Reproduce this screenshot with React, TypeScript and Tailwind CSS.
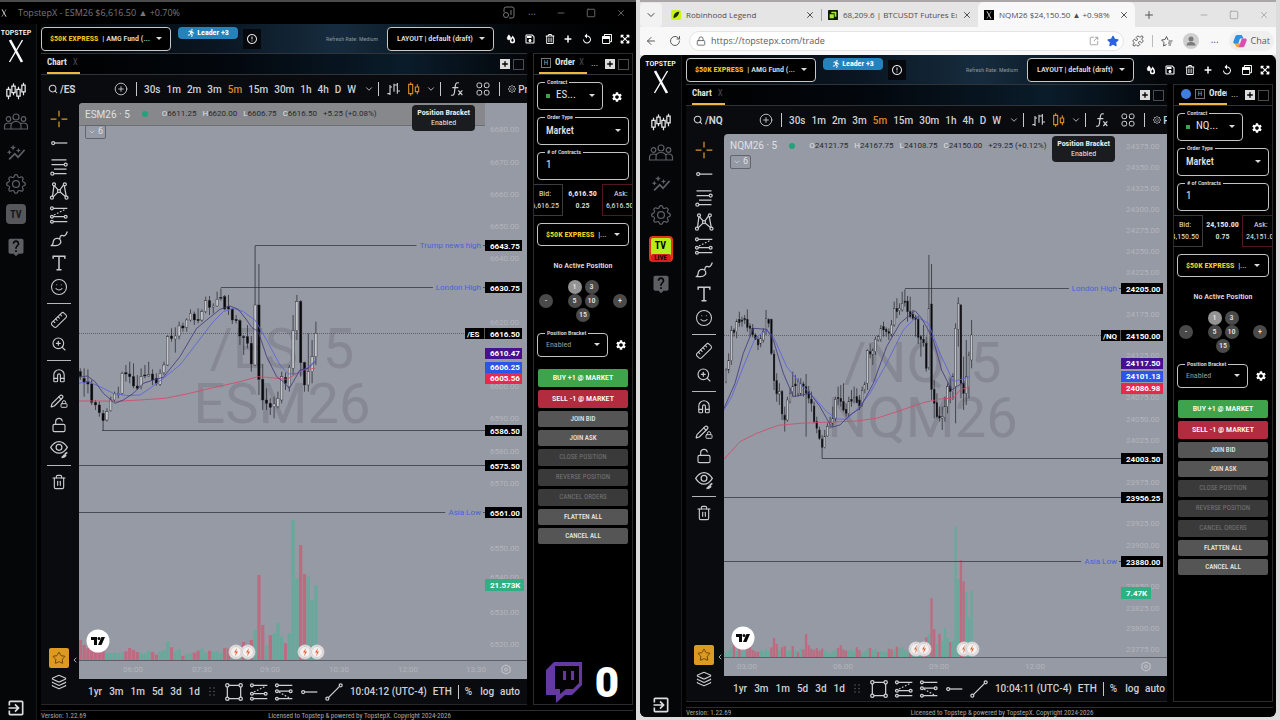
import type { ReactNode } from "react";
import clsx from "clsx";
import {
  ArrowLeft,
  ChevronDown,
  ChevronLeft,
  CirclePlus,
  Eye,
  Layers,
  Lock,
  LockOpen,
  Magnet,
  Minus,
  Pencil,
  Plus,
  Puzzle,
  RotateCw,
  Ruler,
  Search,
  Smile,
  Square,
  SquareArrowOutUpRight,
  Star,
  Trash2,
  X,
  ZoomIn,
} from "lucide-react";
import {
  MdAutoGraph,
  MdErrorOutline,
  MdExitToApp,
  MdLiveHelp,
  MdOutlineSave,
  MdReplay,
  MdSettings,
} from "react-icons/md";
import { FaExpandArrowsAlt, FaRegTrashAlt, FaRegWindowRestore, FaRunning, FaStar } from "react-icons/fa";
import { BsGear } from "react-icons/bs";

/* ---------- market data ---------- */

// high, low, body top, body bottom, 1 = up candle
type Candle = [number, number, number, number, number];

const esCandles: Candle[] = [
  [385, 420, 395, 410, 0], [385, 470, 415, 428, 0], [388, 460, 425, 432, 0], [420, 495, 432, 487, 0],
  [480, 510, 487, 495, 0], [485, 530, 495, 518, 0], [510, 572, 520, 542, 0], [505, 545, 515, 540, 1],
  [470, 515, 480, 512, 1], [455, 485, 462, 480, 1], [440, 475, 460, 465, 1], [395, 465, 400, 460, 1],
  [375, 425, 398, 402, 0], [365, 430, 402, 410, 0], [370, 445, 410, 438, 0], [405, 450, 438, 445, 0],
  [385, 448, 410, 440, 1], [375, 415, 405, 408, 0], [365, 410, 404, 408, 1], [388, 435, 402, 420, 0],
  [400, 437, 415, 430, 0], [388, 438, 400, 433, 1], [365, 405, 375, 398, 1], [285, 378, 290, 375, 1],
  [265, 305, 288, 296, 0], [262, 338, 288, 297, 1], [245, 298, 258, 288, 1], [248, 275, 258, 264, 0],
  [235, 275, 240, 262, 1], [208, 245, 220, 240, 1], [215, 255, 222, 240, 0], [205, 250, 238, 242, 0],
  [208, 245, 215, 240, 1], [170, 220, 182, 215, 1], [168, 225, 182, 202, 0], [190, 220, 198, 202, 1],
  [155, 200, 178, 198, 1], [145, 182, 172, 175, 0], [165, 210, 170, 207, 0], [165, 225, 200, 207, 0],
  [205, 252, 208, 240, 0], [225, 250, 238, 242, 0], [238, 315, 242, 288, 0], [285, 345, 290, 292, 0],
  [255, 325, 290, 310, 0], [288, 395, 310, 372, 0], [18, 378, 195, 375, 1], [72, 465, 195, 418, 0],
  [372, 510, 418, 480, 0], [445, 510, 480, 490, 0], [475, 525, 490, 502, 0], [470, 535, 492, 500, 1],
  [455, 505, 475, 500, 1], [395, 490, 410, 480, 1], [398, 450, 412, 430, 0], [375, 455, 382, 440, 1],
  [225, 405, 272, 385, 1], [165, 300, 185, 272, 1], [180, 410, 185, 368, 0], [365, 455, 368, 435, 0],
  [280, 455, 395, 435, 1], [300, 430, 350, 395, 1], [245, 375, 280, 350, 1],
];

const nqCandles: Candle[] = [
  [385, 430, 390, 425, 1], [340, 400, 362, 390, 1], [258, 375, 272, 362, 1], [265, 290, 270, 278, 0],
  [238, 295, 245, 275, 1], [215, 260, 238, 248, 0], [230, 260, 240, 244, 0], [225, 252, 235, 240, 0],
  [208, 275, 238, 262, 0], [250, 290, 258, 265, 0], [252, 292, 265, 285, 0], [280, 300, 285, 298, 0],
  [290, 330, 298, 315, 0], [285, 322, 295, 312, 1], [265, 308, 275, 300, 1], [210, 285, 235, 270, 1],
  [235, 262, 238, 250, 0], [236, 345, 238, 340, 0], [330, 450, 342, 422, 0], [400, 485, 422, 462, 0],
  [430, 495, 455, 462, 1], [450, 540, 455, 522, 0], [500, 575, 525, 540, 0], [470, 545, 480, 540, 1],
  [445, 490, 460, 485, 1], [395, 470, 440, 455, 1], [405, 470, 432, 438, 0], [415, 470, 425, 462, 1],
  [415, 468, 430, 462, 1], [425, 470, 432, 440, 0], [402, 590, 440, 460, 0], [438, 490, 455, 475, 0],
  [455, 515, 478, 490, 0], [485, 550, 498, 545, 0], [530, 580, 545, 565, 0], [560, 600, 570, 595, 0],
  [585, 655, 597, 622, 0], [570, 625, 590, 622, 1], [550, 590, 560, 588, 1], [530, 565, 548, 560, 1],
  [500, 560, 535, 552, 1], [470, 545, 478, 535, 1], [440, 495, 472, 476, 0], [435, 500, 475, 485, 0],
  [430, 515, 485, 510, 0], [490, 530, 508, 520, 0], [470, 530, 485, 520, 1], [450, 500, 478, 484, 0],
  [440, 490, 472, 476, 1], [445, 490, 470, 488, 0], [465, 510, 480, 498, 0], [440, 500, 452, 490, 1],
  [425, 460, 432, 448, 1], [328, 450, 332, 430, 1], [310, 355, 335, 342, 0], [325, 375, 330, 345, 1],
  [290, 345, 298, 335, 1], [285, 305, 290, 300, 1], [255, 305, 265, 298, 1], [245, 290, 260, 270, 0],
  [262, 290, 268, 275, 0], [265, 300, 275, 280, 0], [240, 290, 255, 282, 1], [185, 260, 205, 255, 1],
  [175, 235, 205, 215, 0], [190, 225, 205, 212, 1], [155, 215, 190, 210, 1], [148, 200, 183, 188, 0],
  [168, 245, 183, 215, 0], [170, 235, 215, 230, 0], [210, 240, 222, 235, 0], [225, 290, 232, 238, 0],
  [228, 312, 238, 292, 0], [285, 350, 290, 298, 0], [255, 320, 298, 308, 0], [290, 395, 310, 385, 0],
  [45, 390, 205, 382, 1], [72, 480, 192, 448, 0], [420, 535, 448, 490, 0], [460, 535, 488, 530, 0],
  [500, 545, 528, 534, 0], [500, 570, 530, 535, 1], [470, 545, 500, 532, 1], [430, 520, 440, 500, 1],
  [415, 490, 440, 455, 0], [400, 480, 410, 455, 1], [250, 550, 265, 440, 1], [172, 320, 190, 268, 1],
  [192, 475, 195, 430, 0], [350, 510, 430, 460, 0], [300, 495, 410, 460, 1], [335, 475, 345, 440, 1],
  [240, 385, 285, 360, 1],
];

// negative = sell volume
const esVolume = [
  -60, -45, -35, -35, -32, -30, -30, 22, 20, 22, 20, 24, -26, -36, -30, -24, 22, 20, 28, -24, -16, 26, 30, 56,
  -38, 26, 32, -12, 18, 20, -22, -28, 34, 22, -28, 24, 26, 20, -36, -34, 26, -34, 40, -54, 40, -60, 90, -255,
  -105, 45, -74, 80, 112, 70, -50, 80, 420, 245, -345, -258, 250, 180, 225,
];
const nqVolume = [
  16, 20, 30, -60, 20, -25, 18, 30, -58, -40, -22, -18, -16, 22, 18, 24, 20, -30, -58, -40, 22, -30, -34, 20,
  22, -34, 20, -16, 26, -24, -70, -36, -26, -22, -28, -20, -26, 20, 16, 12, 18, 22, -28, -36, -24, -20, 20, 24,
  18, -30, -22, 14, 18, 26, -28, 22, 24, -16, 20, 18, 14, -26, -24, 22, -32, 26, 30, 22, 18, -24, 20, 24, 30,
  22, -20, -60, 70, -178, -84, 40, -70, 50, 88, 60, -46, 50, 392, 235, -292, -228, 195, 120, 200,
];

type Level = { y: number; price: string; from?: number; label?: string };

type Market = {
  symbol: string;
  contract: string;
  short: string;
  width: number;
  height: number;
  offset: string;
  start: number;
  step: number;
  base: number;
  body: number;
  candles: Candle[];
  volume: number[];
  fast: string;
  slow: string;
  trend: string;
  tagX: number;
  tagW: number;
  watermarkY: number;
  levels: Level[];
  averages: { y: number; price: string; fill: string }[];
  last: { y: number; price: string };
  volumeTag: { y: number; text: string; w: number };
  ticks: [number, string][];
  times: [number, string][];
  news: number[];
  legend: [string, string][];
  change: string;
  clock: string;
  bid: string;
  mid: string;
  spread: string;
  ask: string;
};

const es: Market = {
  symbol: "/ES", contract: "ESM26", short: "ES...", width: 448, height: 576,
  offset: "translate(-79 137) scale(0.3333)", start: 241, step: 11.4, base: 1260, body: 7,
  candles: esCandles, volume: esVolume,
  fast: "236,412 262,408 285,425 310,460 345,490 370,480 400,460 430,430 460,420 490,412 540,350 590,265 630,232 660,208 690,198 715,208 740,240 755,262 775,275 800,350 830,410 850,425 868,445 880,425 900,390 925,385 945,365",
  slow: "236,430 265,425 300,440 340,460 380,467 420,465 450,445 490,415 540,375 590,310 640,245 670,215 700,205 730,215 765,240 800,300 840,375 865,402 890,400 920,385 948,360",
  trend: "236,483 300,483 350,484 420,480 495,475 560,462 640,443 720,425 775,410 800,412 860,418 910,390 945,385",
  tagX: 406, tagW: 38, watermarkY: 265,
  levels: [
    { y: 142, price: "6643.75", from: 176, label: "Trump news high" },
    { y: 184, price: "6630.75", from: 142, label: "London High" },
    { y: 327, price: "6586.50", from: 23 },
    { y: 362, price: "6575.50" },
    { y: 409, price: "6561.00", label: "Asia Low" },
  ],
  averages: [
    { y: 250, price: "6610.47", fill: "#47108f" },
    { y: 264, price: "6606.25", fill: "#2b55e6" },
    { y: 275, price: "6605.56", fill: "#e5294f" },
  ],
  last: { y: 230, price: "6616.50" },
  volumeTag: { y: 482, text: "21.573K", w: 39 },
  ticks: [
    [26, "6680.00"], [59, "6670.00"], [91, "6660.00"], [123, "6650.00"], [155, "6640.00"], [219, "6620.00"],
    [283, "6600.00"], [315, "6590.00"], [348, "6580.00"], [380, "6570.00"], [445, "6550.00"], [474, "6540.00"],
    [509, "6530.00"], [541, "6520.00"],
  ],
  times: [[54, "06:00"], [123, "07:30"], [191, "09:00"], [260, "10:30"], [329, "12:00"], [397, "13:30"]],
  news: [157, 169, 226, 238],
  legend: [["O", "6611.25"], ["H", "6620.00"], ["L", "6606.75"], ["C", "6616.50"]],
  change: "+5.25 (+0.08%)", clock: "10:04:12 (UTC-4)",
  bid: "6,616.25", mid: "6,616.50", spread: "0.25", ask: "6,616.50",
};

const nq: Market = {
  symbol: "/NQ", contract: "NQM26", short: "NQ...", width: 443, height: 542,
  offset: "translate(-84 106) scale(0.3333)", start: 258, step: 8.01, base: 1252, body: 5,
  candles: nqCandles, volume: nqVolume,
  fast: "252,505 285,430 310,340 340,265 380,268 400,300 430,400 460,470 510,460 540,500 575,562 600,555 630,525 660,505 700,430 740,320 780,250 825,212 845,235 862,265 880,300 905,390 935,450 950,440 975,425",
  slow: "252,510 275,470 310,380 345,295 380,270 400,290 440,380 480,430 520,470 560,515 590,537 620,538 650,510 690,460 740,370 790,270 830,230 865,250 900,340 940,425 990,410",
  trend: "252,658 300,605 350,580 415,556 480,550 580,546 650,543 710,535 780,512 850,488 900,477 940,475 960,450 990,440",
  tagX: 397, tagW: 43, watermarkY: 248,
  levels: [
    { y: 154, price: "24205.00", from: 181, label: "London High" },
    { y: 324, price: "24003.50", from: 98 },
    { y: 363, price: "23956.25" },
    { y: 427, price: "23880.00", label: "Asia Low" },
  ],
  averages: [
    { y: 229, price: "24117.50", fill: "#47108f" },
    { y: 242, price: "24101.13", fill: "#2b55e6" },
    { y: 254, price: "24086.98", fill: "#e5294f" },
  ],
  last: { y: 201, price: "24150.00" },
  volumeTag: { y: 459, text: "7.47K", w: 30 },
  ticks: [
    [12, "24375.00"], [33, "24350.00"], [54, "24325.00"], [75, "24300.00"], [96, "24275.00"], [117, "24250.00"],
    [138, "24225.00"], [180, "24175.00"], [221, "24125.00"], [263, "24075.00"], [285, "24050.00"],
    [306, "24025.00"], [348, "23975.00"], [389, "23925.00"], [411, "23900.00"], [452, "23850.00"],
    [474, "23825.00"], [494, "23800.00"], [515, "23775.00"],
  ],
  times: [[23, "03:00"], [119, "06:00"], [215, "09:00"], [311, "12:00"]],
  news: [192, 200, 240, 248],
  legend: [["O", "24121.75"], ["H", "24167.75"], ["L", "24108.75"], ["C", "24150.00"]],
  change: "+29.25 (+0.12%)", clock: "10:04:11 (UTC-4)",
  bid: "24,150.50", mid: "24,150.00", spread: "0.75", ask: "24,151.00",
};

/* ---------- small icons ---------- */

type IconProps = { className?: string };

const Icon = ({ children, className = "size-5" }: { children: ReactNode; className?: string }) => (
  <svg
    viewBox="0 0 24 24"
    fill="none"
    stroke="currentColor"
    strokeWidth="1.5"
    className={clsx("flex-none", className)}
    aria-hidden
  >
    {children}
  </svg>
);

const CrossIcon = () => (
  <Icon>
    <path d="M12 2v7M12 15v7M2 12h7M15 12h7" />
  </Icon>
);
const HLineIcon = () => (
  <Icon>
    <circle cx="5" cy="12" r="1.8" />
    <path d="M7 12h15" />
  </Icon>
);
const FibIcon = () => (
  <Icon>
    <path d="M3 3.500h18M3 9h15M6 14.500h15M6 20h15" />
    <circle cx="20" cy="9" r="1.800" />
    <circle cx="4" cy="20" r="1.800" />
  </Icon>
);
const PatternIcon = () => (
  <Icon>
    <path d="M4 20 6 5l6 7 6-8 3 16M5 19l7-7 8 7" />
    <circle cx="6" cy="4" r="1.800" fill="#0b0d11" />
    <circle cx="19" cy="4" r="1.800" fill="#0b0d11" />
    <circle cx="12" cy="12" r="1.800" fill="#0b0d11" />
    <circle cx="3.500" cy="20" r="1.800" fill="#0b0d11" />
    <circle cx="21" cy="20" r="1.800" fill="#0b0d11" />
  </Icon>
);
const ForecastIcon = () => (
  <Icon>
    <path d="M5 4h17M5 14h13M5 20h17" />
    <path d="m6 12 14-7" strokeDasharray="2 2" />
    <circle cx="3.500" cy="4" r="1.700" />
    <circle cx="3.500" cy="14" r="1.700" />
    <circle cx="3.500" cy="20" r="1.700" />
    <circle cx="20" cy="14" r="1.700" />
  </Icon>
);
const PositionIcon = () => (
  <Icon>
    <path d="M5 4h17M5 11h13M5 20h17" />
    <path d="m6 12 12 7" strokeDasharray="2 2" />
    <circle cx="3.500" cy="4" r="1.700" />
    <circle cx="3.500" cy="11" r="1.700" />
    <circle cx="3.500" cy="20" r="1.700" />
    <circle cx="20" cy="11" r="1.700" />
  </Icon>
);
const BrushIcon = () => (
  <Icon>
    <path d="M2 20c4 0 2-4 4-7s7-2 8 1-2 6-6 6H2zM13 12c0-3 1-5 4-4 2 1 4-2 5-5" />
  </Icon>
);
const TextIcon = () => (
  <Icon>
    <path d="M5 7V4h14v3M12 4v16M9 20h6" strokeWidth="1.8" />
  </Icon>
);
const LineIcon = () => (
  <Icon>
    <path d="M5 19 19 5" />
    <circle cx="4" cy="20" r="1.800" />
    <circle cx="20" cy="4" r="1.800" />
  </Icon>
);
const RectIcon = () => (
  <Icon>
    <path d="M4 4h16v16H4z" />
    <circle cx="4" cy="4" r="2" fill="#0b0d11" />
    <circle cx="20" cy="4" r="2" fill="#0b0d11" />
    <circle cx="4" cy="20" r="2" fill="#0b0d11" />
    <circle cx="20" cy="20" r="2" fill="#0b0d11" />
  </Icon>
);
const EyeToolIcon = () => (
  <Icon>
    <path d="M2 10c3-5 6-7 10-7s7 2 10 7c-3 5-6 7-10 7s-7-2-10-7z" />
    <circle cx="12" cy="10" r="3.500" />
    <path d="M15 22c3 0 2-3 4-3s1 3-4 3zM19 18l3-2" strokeWidth="2" />
  </Icon>
);
const CandlesIcon = ({ className }: IconProps) => (
  <Icon className={className}>
    <path d="M3 7v3M3 18v4M9 3v3M9 14v3M15 7v3M15 18v4M21 2v3M21 13v4" />
    <path d="M1 10h4v8H1zM7 6h4v8H7zM13 10h4v8h-4zM19 5h4v8h-4z" />
  </Icon>
);
const PeopleIcon = () => (
  <svg viewBox="0 0 26 20" fill="none" stroke="currentColor" strokeWidth="1.2" className="h-5 w-6.5" aria-hidden>
    <circle cx="13" cy="5" r="3" />
    <circle cx="5.500" cy="7" r="2.300" />
    <circle cx="20.500" cy="7" r="2.300" />
    <path d="M8 17v-3c0-3 2-4.500 5-4.500s5 1.500 5 4.500v3zM8 17H1.500v-2.500c0-2 1.500-3.500 4-3.500 1 0 2 .3 2.700.8M18 17h6.500v-2.500c0-2-1.500-3.500-4-3.500-1 0-2 .3-2.700.8" />
  </svg>
);
const DropsIcon = () => (
  <Icon className="size-2.5">
    <path d="M7 2c2 3 4 5 4 8a4 4 0 0 1-8 0c0-3 2-5 4-8z" fill="currentColor" />
    <path d="M16 7c2 3 4 5 4 9a4.500 4.500 0 0 1-9 0c0-4 3-6 5-9z" strokeWidth="3.500" />
  </Icon>
);
const OhlcIcon = () => (
  <Icon className="size-4">
    <path d="M6 6v15M2 19h4M6 9h3M17 3v16M13 6h4M17 15h4M12 4v12" strokeWidth="1.7" />
  </Icon>
);
const CandleTypeIcon = () => (
  <Icon className="size-4">
    <path d="M7 2v3M7 19v3M4 5h6v14H4zM17 5v4M17 16v4M14 9h5v7h-5z" strokeWidth="1.7" />
  </Icon>
);
const GridIcon = () => (
  <Icon className="size-4">
    <rect x="3" y="3" width="7" height="7" rx="2.500" />
    <rect x="14" y="3" width="7" height="7" rx="2.500" />
    <rect x="3" y="14" width="7" height="7" rx="2.500" />
    <rect x="14" y="14" width="7" height="7" rx="2.500" />
  </Icon>
);
const FxIcon = () => (
  <Icon className="size-4">
    <path d="M15 3c-3-1-5 0-5.500 4L8 18c-.5 3-2 4-5 3M5 10h9M14 14l6 7M20 14l-6 7" strokeWidth="1.8" />
  </Icon>
);
const DotsIcon = () => (
  <svg viewBox="0 0 8 12" fill="currentColor" className="h-3 w-2 text-[#55585f]" aria-hidden>
    {[1, 4.5, 8].map((y) => (
      <g key={y}>
        <circle cx="2" cy={y + 1} r=".8" />
        <circle cx="6" cy={y + 1} r=".8" />
      </g>
    ))}
  </svg>
);
const TopstepX = ({ className }: IconProps) => (
  <svg viewBox="0 0 16 24" fill="none" stroke="currentColor" className={className} aria-hidden>
    <path d="M2 1 14 23" strokeWidth="2.600" />
    <path d="M14.500 1 1.500 23" strokeWidth="1.400" />
  </svg>
);
const TwitchLogo = () => (
  <svg viewBox="0 0 38 42" className="h-[42px] w-[38px]" aria-label="Twitch" role="img">
    <path d="M9 0 1 8v25h10v8l9-8h7l10-10V0z" fill="#6439a0" />
    <path d="M10 4h24v17l-6 6h-7l-6 5v-5h-5z" fill="#030305" />
    <path d="M18 9h3v9h-3zM26 9h3v9h-3z" fill="#6439a0" />
  </svg>
);

/* ---------- chart ---------- */

const Chart = ({ m }: { m: Market }) => {
  const axisY = m.height - 18.5;
  const half = m.tagX / 2;
  return (
    <svg
      viewBox={`0 0 ${m.width} ${m.height}`}
      className="h-full w-full font-[Roboto,sans-serif] text-[8px]"
      role="img"
      aria-label={`${m.contract} chart`}
    >
      <g fill="#868993" fontSize="56" textAnchor="middle">
        <text x={half} y={m.watermarkY}>{m.symbol}, 5</text>
        <text x={half} y={m.watermarkY + 55}>{m.contract}</text>
      </g>
      <g transform={m.offset}>
        {m.volume.map((v, i) => (
          <rect
            key={i}
            x={m.start + i * m.step - m.body * 0.7}
            y={m.base - Math.abs(v)}
            width={m.body * 1.4}
            height={Math.abs(v)}
            fill={v < 0 ? "#bd6b80" : "#67a99b"}
          />
        ))}
      </g>
      {m.levels.map((l) => (
        <path key={l.price} d={`M${l.from ?? 0} ${l.y + 0.5}H${m.tagX}`} stroke="#4a4d56" />
      ))}
      <path d={`M0 ${m.last.y + 0.5}H${m.tagX}`} stroke="#5c5f68" strokeDasharray="1 1" />
      <g transform={m.offset}>
        {m.candles.map(([high, low, top, bottom, up], i) => {
          const x = m.start + i * m.step;
          return (
            <g key={i}>
              <path d={`M${x} ${high}V${low}`} stroke="#26282e" strokeWidth="2.2" />
              <rect
                x={x - m.body / 2}
                y={top}
                width={m.body}
                height={Math.max(bottom - top, 3)}
                fill={up ? "#c3c5cb" : "#08080b"}
                stroke="#26282e"
                strokeWidth="1.2"
              />
            </g>
          );
        })}
        <g fill="none" strokeWidth="2.600" strokeLinejoin="round">
          <polyline points={m.trend} stroke="#d34b6d" />
          <polyline points={m.slow} stroke="#5d62dd" />
          <polyline points={m.fast} stroke="#453b80" />
        </g>
      </g>

      <path d={`M0 ${axisY}H${m.width}`} stroke="#5c5f68" />
      <g fill="#b3b5bd" fontSize="8">
        {m.ticks.map(([y, t]) => (
          <text key={t} x={m.tagX + 5} y={y + 3}>{t}</text>
        ))}
        {m.times.map(([x, t]) => (
          <text key={t} x={x} y={m.height - 7} textAnchor="middle">{t}</text>
        ))}
      </g>
      <g fill="none" stroke="#c4c6cc">
        <path d={`M${m.width - 21} ${m.height - 14}l4 2v5l-4 2-4-2v-5z`} />
        <circle cx={m.width - 21} cy={m.height - 9.5} r="1.500" />
      </g>

      <g fontSize="8" fontWeight="700">
        {m.levels.map((l) => (
          <g key={l.price}>
            {l.label && (
              <>
                <rect x={m.tagX - 7 - l.label.length * 4.1} y={l.y - 4} width={l.label.length * 4.1 + 5} height="9" fill="#969aa4" />
                <text x={m.tagX - 4} y={l.y + 3} textAnchor="end" fill="#4a62dd" fontSize="8" fontWeight="400">
                  {l.label}
                </text>
              </>
            )}
            <rect x={m.tagX} y={l.y - 5} width={m.tagW - 1} height="11" fill="#000" />
            <text x={m.tagX + 5} y={l.y + 4} fill="#fff">{l.price}</text>
          </g>
        ))}
        {m.averages.map((a) => (
          <g key={a.price}>
            <rect x={m.tagX} y={a.y - 5} width={m.tagW - 1} height="11" fill={a.fill} />
            <text x={m.tagX + 5} y={a.y + 3} fill="#fff">{a.price}</text>
          </g>
        ))}
        <rect x={m.tagX - 20} y={m.last.y - 5} width={m.tagW + 19} height="11" fill="#000" />
        <path d={`M${m.tagX - 0.5} ${m.last.y - 5}v11`} stroke="#555" />
        <text x={m.tagX - 18} y={m.last.y + 4} fill="#fff">{m.symbol}</text>
        <text x={m.tagX + 5} y={m.last.y + 4} fill="#fff">{m.last.price}</text>
        <rect x={m.tagX} y={m.volumeTag.y - 6} width={m.volumeTag.w} height="12" fill="#2fb083" />
        <text x={m.tagX + 5} y={m.volumeTag.y + 3} fill="#fff">{m.volumeTag.text}</text>
      </g>

      <circle cx="19" cy={m.height - 38} r="11.500" fill="#fff" />
      <g transform={`translate(12 ${m.height - 42})`} fill="#08080a">
        <path d="M0 0h6v8H3V3H0zM10.500 0H14l-3.500 8H7z" />
        <circle cx="8" cy="1.500" r="1.500" />
      </g>
      {m.news.map((x) => (
        <g key={x}>
          <circle cx={x} cy={m.height - 27} r="7" fill="#f5f0f0" stroke="#d3cfd2" />
          <circle cx={x} cy={m.height - 27} r="5.500" fill="none" stroke="#c2babd" strokeWidth=".7" />
          <path d={`M${x + 1} ${m.height - 31}l-3 4.500h2l-1 4 3-5h-2z`} fill="#de6238" />
        </g>
      ))}
    </svg>
  );
};

const Legend = ({ m, strip }: { m: Market; strip?: boolean }) => (
  <div className="absolute inset-x-0 top-0 font-[Roboto,sans-serif] text-[8px]">
    <div className={clsx("mr-[42px] flex h-[23px] items-center pl-1.5", strip && "border-b border-[#6d6f74] bg-[#87888b]")}>
      <span className="text-[10px] text-[#dfe0e4]">{m.contract} · 5</span>
      <span className="ml-3 size-1.5 rounded-full bg-[#23a17c]" />
      <span className="ml-3.5 flex gap-1.5 whitespace-nowrap">
        {m.legend.map(([k, v]) => (
          <span key={k} className="text-[#26282e]">
            <span className="text-[#dfe0e4]">{k}</span>
            {v}
          </span>
        ))}
        <span className="text-[#26282e]">{m.change}</span>
      </span>
    </div>
    <button
      className={clsx(
        "ml-1.5 flex h-3.5 w-[21px] items-center justify-center gap-0.5 rounded-xs border border-[#62656e] text-[9px] text-[#dfe0e4]",
        strip ? "-mt-px" : "-mt-0.5",
      )}
    >
      <ChevronDown className="size-2" />6
    </button>
  </div>
);

const drawTools: (ReactNode | null)[] = [
  <span className="text-[#d99a20]"><CrossIcon /></span>,
  <HLineIcon />,
  <FibIcon />,
  <PatternIcon />,
  <ForecastIcon />,
  <BrushIcon />,
  <TextIcon />,
  <Smile className="size-[18px]" strokeWidth={1.4} />,
  null,
  <Ruler className="size-[18px] -scale-x-100" strokeWidth={1.4} />,
  <ZoomIn className="size-4" strokeWidth={1.7} />,
  null,
  <Magnet className="size-4 -rotate-45" strokeWidth={1.7} />,
  <span className="flex items-end"><Pencil className="size-3.5" strokeWidth={2} /><Lock className="-ml-1 size-2" strokeWidth={3} /></span>,
  <LockOpen className="size-4" strokeWidth={1.7} />,
  <EyeToolIcon />,
  null,
  <Trash2 className="size-4" strokeWidth={1.7} />,
];

const DrawColumn = () => (
  <div className="flex w-[38px] flex-none flex-col items-center pt-1 pr-0.5 text-[#c9cbd0]">
    {drawTools.map((tool, i) =>
      tool ? (
        <button key={i} className="flex h-6 w-full items-center justify-center">{tool}</button>
      ) : (
        <hr key={i} className="my-1 w-6 border-[#b5b7bc]" />
      ),
    )}
    <span className="flex-1" />
    <button className="relative flex size-5 items-center justify-center rounded-xs bg-[#dc9a22] text-[#5e3c00]">
      <Star className="size-3.5" strokeWidth={1.5} />
      <ChevronLeft className="absolute top-2 -right-2.5 size-2 text-white" />
    </button>
    <button className="mt-1 mb-[-13px] flex h-5 items-center">
      <Layers className="size-4" strokeWidth={1.7} />
    </button>
  </div>
);

const Divider = ({ className }: IconProps) => <span className={clsx("h-3.5 w-px flex-none bg-[#c5c7cb]", className)} />;

const PanelButtons = () => (
  <span className="flex flex-none items-center gap-[3px]">
    <button aria-label="Add tab" className="flex size-2.5 items-center justify-center bg-[#dcdcdc] text-black">
      <Plus className="size-2" strokeWidth={4} />
    </button>
    <button aria-label="Maximize" className="size-[11px] border border-[#4a4c50]" />
  </span>
);

const ChartPanel = ({ m, strip }: { m: Market; strip?: boolean }) => (
  <section className="flex min-w-0 flex-1 flex-col border-b border-[#24262a] bg-[#090b0f]">
    <div className="flex h-[22px] flex-none items-stretch justify-between border-y border-[#303338] bg-[linear-gradient(90deg,#000,#03080e_40%,#0a1c2a_75%,#03060a)] pr-[3px] pl-1.5">
      <button className="flex items-center gap-1.5 border-b-2 border-[#f0b73c] pr-0.5 text-[9px] font-bold text-[#e3e3e3]">
        Chart <span className="font-normal text-[#4b4d52]">X</span>
      </button>
      <PanelButtons />
    </div>
    <div className="flex h-7 flex-none items-center overflow-hidden pl-[7px] font-[Roboto,sans-serif] text-[10px] font-medium whitespace-nowrap text-[#cfd0d4]">
      <button className="flex w-[66px] flex-none items-center gap-0.5 font-bold">
        <Search className="size-2.5" strokeWidth={2.5} />
        {m.symbol}
      </button>
      <CirclePlus className="size-3.5 flex-none" strokeWidth={1.5} />
      <Divider className="ml-2" />
      <div className="ml-[7px] flex gap-1.5">
        {["30s", "1m", "2m", "3m", "5m", "15m", "30m", "1h", "4h", "D", "W"].map((t) => (
          <button key={t} className={t === "5m" ? "text-[#d98a24]" : ""}>{t}</button>
        ))}
      </div>
      <ChevronDown className="ml-2 size-2.5 flex-none" />
      <Divider className="mr-[7px] ml-1" />
      <OhlcIcon />
      <span className="ml-1 text-[#d98a24]"><CandleTypeIcon /></span>
      <ChevronDown className="ml-1 size-2.5 flex-none" />
      <Divider className="mr-2 ml-1" />
      <FxIcon />
      <span className="ml-2.5"><GridIcon /></span>
      <Divider className="mx-2" />
      <button className="flex flex-none items-center gap-0.5">
        <BsGear className="size-2" /> Profile
      </button>
    </div>
    <div className="flex min-h-0 flex-1">
      <DrawColumn />
      <div className="relative min-w-0 flex-1 overflow-hidden rounded-tl-sm bg-[#969aa4]">
        <Chart m={m} />
        <Legend m={m} strip={strip} />
        <div className="absolute top-0.5 right-[52px] rounded-sm bg-[#1b1c20] px-[5px] py-[3px] text-center text-[8px] leading-[10px] text-[#e8e8e8]">
          <b className="block">Position Bracket</b>Enabled
        </div>
      </div>
    </div>
    <div className="flex h-[25px] flex-none items-center pl-[47px] font-[Roboto,sans-serif] text-[10px] font-medium whitespace-nowrap text-[#cfd0d4]">
      <div className="flex gap-[7px]">
        {["1yr", "3m", "1m", "5d", "3d", "1d"].map((t) => (
          <button key={t}>{t}</button>
        ))}
      </div>
      <span className="ml-2"><DotsIcon /></span>
      <span className="ml-2 flex gap-[5px]">
        <RectIcon />
        <ForecastIcon />
        <PositionIcon />
        <HLineIcon />
        <LineIcon />
      </span>
      <span className="ml-1.5">{m.clock}</span>
      <button className="ml-1.5">ETH</button>
      <Divider className="mx-1.5" />
      <button>%</button>
      <button className="ml-2">log</button>
      <button className="ml-1.5">auto</button>
    </div>
  </section>
);

/* ---------- order panel ---------- */

const Caret = () => <span className="flex-none border-x-3 border-t-3 border-x-transparent border-t-[#dcdcdc]" />;

const Select = ({ id, value, label, className }: { id?: string; value: string; label?: string; className?: string }) => (
  <>
    <select id={id} aria-label={label} className={clsx("min-w-0 flex-1 appearance-none bg-transparent outline-none", className)}>
      <option>{value}</option>
    </select>
    <Caret />
  </>
);

const Field = ({ id, label, className, children }: { id: string; label: string; className?: string; children: ReactNode }) => (
  <fieldset className={clsx("min-w-0 rounded-sm border border-[#c4c4c4] px-[5px]", className)}>
    <legend className="ml-0.5 px-0.5 text-[6px] leading-[8px] font-medium text-[#e0e0e0]">
      <label htmlFor={id}>{label}</label>
    </legend>
    <div className="flex h-[23px] items-center gap-1 pr-0.5 pb-1 pl-[3px]">{children}</div>
  </fieldset>
);

const Round = ({ children, on }: { children: ReactNode; on?: boolean }) => (
  <button
    className={clsx(
      "size-3.5 flex-none rounded-full text-[8px] leading-none font-medium text-[#e6e6e6]",
      on ? "bg-[#939393]" : "bg-[#4a4a4a]",
    )}
  >
    {children}
  </button>
);

const actions = [
  { name: "BUY +1 @ MARKET", style: "h-[18px] bg-[#3fa34b] text-[8px] text-white" },
  { name: "SELL -1 @ MARKET", style: "h-[18px] bg-[#b02c3e] text-[8px] text-white" },
  { name: "JOIN BID", style: "h-4 bg-[#555] text-[7px] text-[#e6e6e6]" },
  { name: "JOIN ASK", style: "h-4 bg-[#555] text-[7px] text-[#e6e6e6]" },
  { name: "CLOSE POSITION", style: "h-[17px] bg-[#3a3a3a] text-[7px] text-[#757575]", off: true },
  { name: "REVERSE POSITION", style: "h-[17px] bg-[#3a3a3a] text-[7px] text-[#757575]", off: true },
  { name: "CANCEL ORDERS", style: "h-[17px] bg-[#3a3a3a] text-[7px] text-[#757575]", off: true },
  { name: "FLATTEN ALL", style: "h-4 bg-[#555] text-[7px] text-[#e6e6e6]" },
  { name: "CANCEL ALL", style: "h-4 bg-[#555] text-[7px] text-[#e6e6e6]" },
];

const OrderPanel = ({ m, linked }: { m: Market; linked?: boolean }) => (
  <section className="w-[100px] flex-none overflow-hidden border border-[#2a2c30] bg-black text-[#e3e3e3]">
    <div className="flex h-[21px] items-stretch border-b border-[#303338] pr-[3px] pl-[5px]">
      <button className="flex w-12 flex-none items-center gap-1 overflow-hidden border-b-2 border-[#f0b73c] pl-0.5 text-[9px] font-bold">
        {linked && <span className="size-2.5 flex-none rounded-full bg-[#3f7de0]" />}
        <span className="flex size-2.5 flex-none items-center justify-center border border-[#777] text-[7px] font-normal text-[#aaa]">H</span>
        Order
        {!linked && <span className="font-normal text-[#4b4d52]">X</span>}
      </button>
      <span className="flex-1 self-center pl-1 text-[9px]">...</span>
      <PanelButtons />
    </div>
    <div className="px-[3px] pt-[3px]">
      <div className="flex items-center">
        <Field id={`contract-${m.contract}`} label="Contract" className="w-[66px]">
          <span className="size-1 flex-none bg-[#3ea34a]" />
          <Select id={`contract-${m.contract}`} value={m.short} className="pl-0.5 text-[11px]" />
        </Field>
        <button aria-label="Contract settings" className="mt-1.5 ml-2"><MdSettings className="size-3 text-white" /></button>
      </div>
      <Field id={`type-${m.contract}`} label="Order Type" className="mt-[3px]">
        <Select id={`type-${m.contract}`} value="Market" className="text-[10px] font-medium" />
      </Field>
      <Field id={`qty-${m.contract}`} label="# of Contracts" className="mt-[3px]">
        <input id={`qty-${m.contract}`} defaultValue="1" className="w-full bg-transparent text-[11px] outline-none" />
      </Field>
    </div>
    <div className="mt-1 flex h-8 text-[8px] leading-[12px] whitespace-nowrap">
      <div className="flex w-[29px] flex-none flex-col items-end justify-center border-y border-r border-[#3a3c40] pr-[3px]">
        <span className="pr-2">Bid:</span>
        <span>{m.bid}</span>
      </div>
      <div className="flex-1 pt-1 text-center">
        <b className="block">{m.mid}</b>
        <span className="font-medium">{m.spread}</span>
      </div>
      <div className="flex w-[30px] flex-none flex-col justify-center border-y border-l border-[#521722] pl-[3px]">
        <span className="pl-2">Ask:</span>
        <span>{m.ask}</span>
      </div>
    </div>
    <div className="px-[3px]">
      <label className="mt-[7px] flex h-[23px] items-center rounded-sm border border-[#c4c4c4] px-2 text-[8px]">
        <b className="mr-1 flex-none text-[#f3d321]">$50K EXPRESS</b>
        <Select value="|..." />
      </label>
      <p className="mt-3.5 text-center text-[8px] leading-[12px] font-medium">No Active Position</p>
      <div className="mt-2 flex items-center justify-between px-0.5">
        <Round>-</Round>
        <div className="flex w-9 flex-wrap justify-center gap-x-[3px]">
          <Round on>1</Round>
          <Round>3</Round>
          <Round>5</Round>
          <Round>10</Round>
          <Round>15</Round>
        </div>
        <Round>+</Round>
      </div>
      <div className="mt-[7px] flex items-center">
        <Field id={`bracket-${m.contract}`} label="Position Bracket" className="w-[71px] text-[#9a9a9a] [&>div]:h-[19px]">
          <Select id={`bracket-${m.contract}`} value="Enabled" className="text-[8px]" />
        </Field>
        <button aria-label="Bracket settings" className="mt-1 ml-[7px]"><MdSettings className="size-3 text-white" /></button>
      </div>
      <div className="mt-3 flex flex-col gap-[3px] px-px">
        {actions.map((a) => (
          <button key={a.name} disabled={a.off} className={clsx("rounded-xs", !a.off && "font-medium", a.style)}>
            {a.name}
          </button>
        ))}
      </div>
    </div>
  </section>
);

/* ---------- workspace ---------- */

const SideNav = ({ live }: { live?: boolean }) => (
  <nav className={clsx("mr-1 flex flex-none flex-col border-r border-[#17191c] bg-[#050608]", live ? "w-[42px]" : "w-[37px]")}>
    <div className={clsx("flex flex-1 flex-col items-center pt-[3px] text-[#5d5f63]", live ? "w-[41px]" : "w-8")}>
      <span className="text-[8px] leading-[12px] font-medium text-white">TOPSTEP</span>
      <TopstepX className="h-6 w-4 text-white" />
      <a href="#trade" aria-label="Trade" className="mt-3 flex h-[31px] items-center text-[#e8e8e8]"><CandlesIcon className="size-5" /></a>
      <a href="#people" aria-label="Leaderboard" className="flex h-[31px] items-center"><PeopleIcon /></a>
      <a href="#stats" aria-label="Insights" className="flex h-[31px] items-center"><MdAutoGraph className="size-5" /></a>
      <a href="#settings" aria-label="Settings" className="flex h-[31px] items-center"><BsGear className="size-5" /></a>
      {live ? (
        <a href="#tv" className="mt-1.5 mb-1 flex h-[26px] w-6 flex-col items-center rounded-sm border-2 border-[#e8321c] bg-[#b4ec1c] text-[10px] leading-[16px] font-bold text-black">
          TV
          <span className="w-5 rounded-xs bg-[#d81f1f] text-center text-[7px] leading-[8px] text-black">LIVE</span>
        </a>
      ) : (
        <a href="#tv" className="my-[5px] flex size-5 items-center justify-center rounded-sm bg-[#55575a] text-[10px] font-bold text-[#151618]">TV</a>
      )}
      <a href="#help" aria-label="Help" className="mt-0.5 flex h-[31px] items-center"><MdLiveHelp className="size-5" /></a>
      <span className="flex-1" />
      <button aria-label="Log out" className="mb-0.5 text-[#dcdcdc]"><MdExitToApp className="size-5" /></button>
    </div>
  </nav>
);

const TopBar = () => (
  <header className="flex h-[29px] flex-none items-center bg-[linear-gradient(90deg,#04070a,#0a1622_30%,#162c3e_50%,#0e1f2d_60%,#04070a_80%,#000)] text-[#e3e3e3]">
    <label className="flex h-6 w-[130px] items-center rounded-sm border border-[#c8c8c8] bg-black px-2 text-[8px] font-medium">
      <b className="mr-1 flex-none text-[#f3c321]">$50K EXPRESS</b>
      <Select value="| AMG Fund (..." />
    </label>
    <button className="mb-3 ml-[7px] flex h-3 w-[60px] items-center justify-center gap-0.5 rounded-sm bg-[#2583bb] text-[8px] font-bold text-white">
      <FaRunning className="size-2" />
      Leader +3
    </button>
    <button aria-label="Info" className="ml-[5px] flex h-5 w-4.5 items-center justify-center bg-[#05080c]">
      <MdErrorOutline className="size-3" />
    </button>
    <span className="flex-1" />
    <span className="mr-[9px] text-[6px] whitespace-nowrap text-[#8a939b]">Refresh Rate: Medium</span>
    <label className="flex h-6 w-[107px] items-center rounded-sm border border-[#c8c8c8] bg-black pr-2 pl-[9px] text-[8px] font-medium">
      <Select label="Layout" value="LAYOUT | default (draft)" />
    </label>
    <div className="ml-3 flex w-[127px] items-center justify-between pr-[3px] text-white">
      <DropsIcon />
      <MdOutlineSave className="size-3" />
      <FaRegTrashAlt className="size-2.5" />
      <Plus className="size-2.5" strokeWidth={3.5} />
      <MdReplay className="size-3" />
      <FaRegWindowRestore className="size-2.5" />
      <FaExpandArrowsAlt className="size-2.5" />
    </div>
  </header>
);

const Workspace = ({ m, live }: { m: Market; live?: boolean }) => (
  <div
    className={clsx(
      "flex min-h-0 flex-1 overflow-hidden bg-black font-['Roboto_Condensed','Liberation_Sans_Narrow',Roboto,sans-serif]",
      live && "rounded-md",
    )}
  >
    <SideNav live={live} />
    <div className="flex min-w-0 flex-1 flex-col pr-[3px]">
      <TopBar />
      <div className="flex min-h-0 flex-1 gap-1.5">
        <ChartPanel m={m} strip={!live} />
        <OrderPanel m={m} linked={live} />
      </div>
      <footer className="mt-[5px] flex h-2.5 flex-none border-t border-[#2c2e32] text-[7px] leading-[10px] text-[#a9a9a9]">
        <span>Version: 1.22.69</span>
        <span className="flex-1 text-center">Licensed to Topstep &amp; powered by TopstepX. Copyright 2024-2026</span>
      </footer>
    </div>
  </div>
);

/* ---------- windows ---------- */

const BrowserTab = ({ icon, title, active }: { icon: ReactNode; title: string; active?: boolean }) => (
  <div
    className={clsx(
      "flex h-full items-center gap-[5px] px-1.5 text-[8px] whitespace-nowrap",
      active ? "w-[157px] flex-none rounded-t-md bg-[#f8f8f8]" : "min-w-0 flex-1",
    )}
  >
    {icon}
    <span className="min-w-0 flex-1 overflow-hidden">{title}</span>
    <button aria-label={`Close ${title}`}><X className="size-2.5 text-[#333]" /></button>
  </div>
);

const BrowserChrome = () => (
  <div className="flex-none font-['Open_Sans',sans-serif] text-[#5a5a5c]">
    <div className="flex h-[27px] items-center border-t-2 border-[#aaa6a9] bg-[#e5e5e6] text-[#a0a0a0]">
      <button aria-label="Tab list" className="flex h-6 w-[22px] items-center justify-center rounded-sm bg-[#f2f2f2]"><ChevronDown className="size-3 text-[#444]" /></button>
      <div className="ml-[3px] flex h-full min-w-0 flex-1 items-center text-[#4e4e50]">
        <BrowserTab
          title="Robinhood Legend"
          icon={
            <svg viewBox="0 0 12 12" className="size-2.5 flex-none">
              <rect width="12" height="12" rx="2" fill="#c8f416" />
              <path d="M3 10c0-5 2-8 7-8-1 5-3 6-7 8z" fill="#1b2a05" />
            </svg>
          }
        />
        <span className="h-3 w-px bg-[#a5a5a5]" />
        <BrowserTab
          title="68,209.6 | BTCUSDT Futures Exchange"
          icon={
            <svg viewBox="0 0 12 12" className="size-2.5 flex-none">
              <rect width="12" height="12" rx="1" fill="#0b1a05" />
              <path d="M4 2h6v6H8V4H4zM2 5h5v5H2z" fill="#a8ec2a" />
            </svg>
          }
        />
        <BrowserTab
          active
          title="NQM26 $24,150.50 ▲ +0.98%"
          icon={<span className="flex size-2.5 flex-none items-center justify-center bg-black text-white"><TopstepX className="h-2 w-1.5" /></span>}
        />
      </div>
      <Plus className="ml-2 size-3 text-[#555]" />
      <span className="ml-[44px] flex items-center gap-5 pr-[7px]">
        <Minus className="size-2.5" />
        <Square className="size-2.5" />
        <X className="size-2.5" />
      </span>
    </div>
    <div className="flex h-7 items-center bg-[#f8f8f8] pr-0.5 pl-[5px]">
      <ArrowLeft className="size-3" />
      <RotateCw className="ml-3 size-3" />
      <div className="ml-2 flex h-5 min-w-0 flex-1 items-center rounded-full border border-[#e4e4e4] bg-white pr-1 pl-1.5">
        <Lock className="size-2.5 flex-none" />
        <input aria-label="Address" defaultValue="https://topstepx.com/trade" className="ml-[5px] min-w-0 flex-1 bg-transparent text-[9px] outline-none" />
        <SquareArrowOutUpRight className="mr-2 size-2.5 text-[#999]" />
        <FaStar className="size-3 text-[#2a62e0]" />
      </div>
      <Puzzle className="ml-2 size-3" />
      <span className="mx-2 h-3 w-px bg-[#bbb]" />
      <svg viewBox="0 0 24 24" fill="none" stroke="currentColor" strokeWidth="2" strokeLinejoin="round" className="size-3">
        <path d="M14 10 11 3 8 9l-7 1 5 5-1 7 6-3M15 12h8M14 16h7M15 20h5" />
      </svg>
      <svg viewBox="0 0 16 16" className="ml-2.5 size-4">
        <circle cx="8" cy="8" r="8" fill="#cfcfcf" />
        <circle cx="8" cy="6" r="2.500" fill="#7a7a7a" />
        <path d="M3.500 12.500c0-2.500 2-3.500 4.500-3.500s4.500 1 4.500 3.500z" fill="#7a7a7a" />
      </svg>
      <span className="mb-1 ml-3 text-[10px] leading-none">...</span>
      <button className="ml-2.5 flex h-5 items-center gap-1 rounded-full bg-[#efefef] px-1 text-[9px]">
        <svg viewBox="0 0 16 16" className="size-3.5">
          <path d="M5 1h5l2 4H8L6 11H2C0 11 0 9 1 7l2-5c.400-.700 1-1 2-1z" fill="#2f8fe0" />
          <path d="M11 15H6l-2-4h4l2-6h4c2 0 2 2 1 4l-2 5c-.400.700-1 1-2 1z" fill="#d94fb0" />
          <path d="M2 11h6l-1 3c-.3 1-1 1-2 1s-2-2-3-4z" fill="#f2a73a" />
        </svg>
        Chat
      </button>
    </div>
  </div>
);

export default function App() {
  return (
    <main className="grid h-screen grid-cols-2 gap-1 overflow-hidden bg-[#dcdcdd] pr-1">
      <div className="relative flex min-w-0 flex-col bg-black">
        <div className="flex h-6 flex-none items-center border-t-2 border-[#4b4b4b] font-['Open_Sans',sans-serif] text-[9px] text-[#777]">
          <TopstepX className="ml-px h-2 w-1.5 text-white" />
          <span className="ml-[11px] flex-1">TopstepX - ESM26 $6,616.50 ▲ +0.70%</span>
          <svg viewBox="0 0 14 14" fill="none" stroke="currentColor" className="size-3.5">
            <path d="M2 6V3q0-2 2-2h6q2 0 2 2v7q0 2-2 2H7M9 4v5" />
            <circle cx="4" cy="9" r="2.500" />
          </svg>
          <span className="mb-1 ml-3 text-[10px]">...</span>
          <span className="ml-5 flex items-center gap-5 pr-2.5">
            <Minus className="size-2.5" />
            <Square className="size-2.5" />
            <X className="size-2.5" />
          </span>
        </div>
        <Workspace m={es} />
        <div className="absolute right-[17px] bottom-4 flex items-center gap-3">
          <TwitchLogo />
          <span className="font-[Roboto,sans-serif] text-[42px] leading-none font-black text-white">0</span>
        </div>
      </div>
      <div className="flex min-w-0 flex-col pb-[3px]">
        <BrowserChrome />
        <Workspace m={nq} live />
      </div>
    </main>
  );
}
